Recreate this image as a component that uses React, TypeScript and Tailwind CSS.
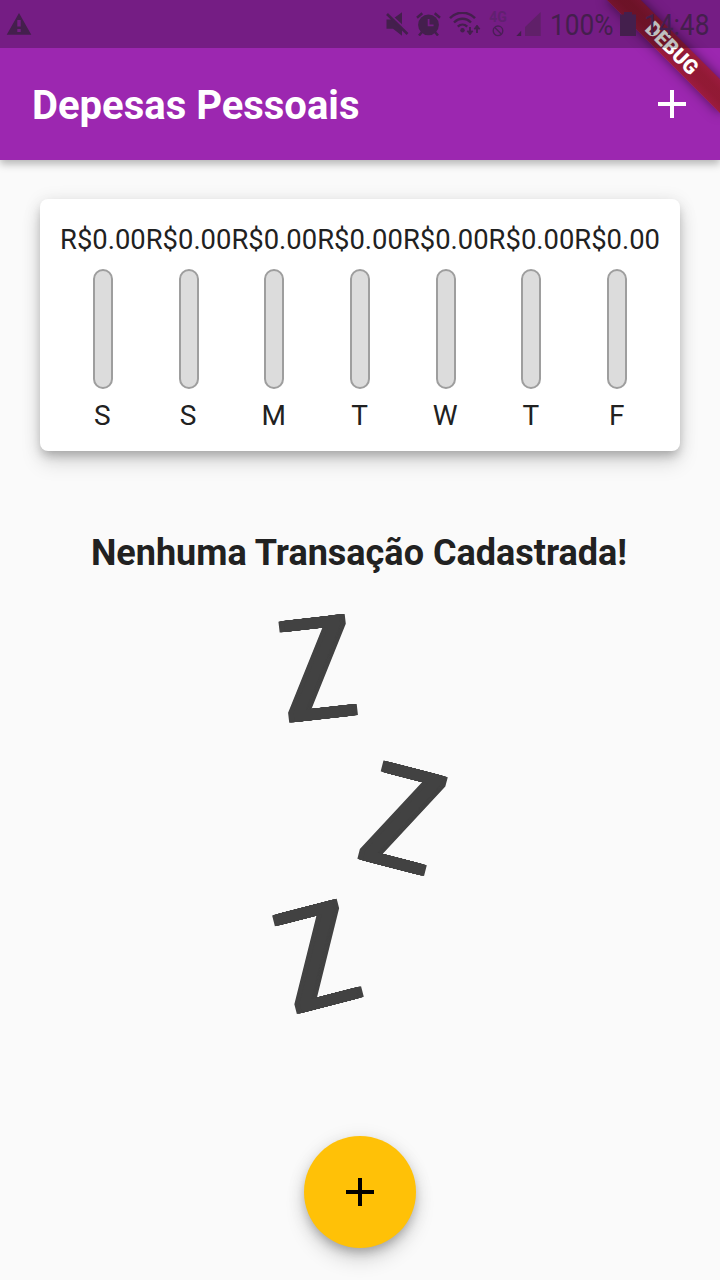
import React from "react";

const days = ["S", "S", "M", "T", "W", "T", "F"];

function StatusBar() {
  return (
    <div className="absolute inset-x-0 top-0 z-20 flex h-12 items-start bg-black/25 text-[#441f4d]">
      <svg className="ml-[6px] mt-3 h-6 w-[26px]" viewBox="0 0 26 24" fill="currentColor">
        <path fillRule="evenodd" d="M13 1 25.3 22.8H.7ZM11.3 8v6.5h3.4V8ZM11.3 17v3h3.4v-3Z" />
      </svg>
      <svg className="ml-[354px] mt-3 h-6 w-6" viewBox="0 0 24 24" fill="currentColor">
        <path d="M.5 7.5H6l10-7.3v23.5l-9-7H.5Z" />
        <path d="M1.8.8 23 20.5" stroke="#751d84" strokeWidth="2.4" />
        <path d="M1 2 21.5 22" stroke="currentColor" strokeWidth="2.6" />
      </svg>
      <svg className="ml-[5px] mt-3 h-6 w-[27px]" viewBox="0 0 27 24" fill="none" stroke="currentColor">
        <circle cx="13.5" cy="12.8" r="10.4" fill="currentColor" stroke="none" />
        <path d="M2 5.8 7.3 1.3M25 5.8 19.7 1.3" strokeWidth="2.5" />
        <path d="m7 20-3 3.5m16-3.5 3 3.5" strokeWidth="2.5" />
        <path d="M13.6 7v6.3h5" stroke="#751d84" strokeWidth="1.8" />
      </svg>
      <svg className="ml-[7px] mt-3 h-6 w-8" viewBox="0 0 32 24" fill="none" stroke="currentColor">
        <path d="M1 6.2C8-1.1 18.8-1.1 26 6.2" strokeWidth="2.5" />
        <path d="M5 10.5c5-5 12-5 17 0M8.8 14.7c2.8-2.8 6.6-2.8 9.4 0" strokeWidth="2.4" />
        <circle cx="13.5" cy="18.3" r="2.2" fill="currentColor" stroke="none" />
        <path d="M21 15v7M28 21v-7" strokeWidth="1.8" />
        <path d="m18 19 3 4 3-4ZM25 17l3-4 3 4Z" fill="currentColor" strokeWidth=".8" />
      </svg>
      <div className="ml-[7px] mt-[11px] flex w-5 flex-col items-center text-[#612070]">
        <span className="font-['Roboto'] text-[14px] font-bold leading-[13px]">4G</span>
        <svg className="mt-px h-3 w-3 text-[#4b1e57]" viewBox="0 0 12 12" fill="none" stroke="currentColor" strokeWidth="1.4">
          <circle cx="6" cy="5.8" r="4.8" />
          <path d="m2.8 2.6 6.4 6.4" />
        </svg>
      </div>
      <svg className="ml-[8px] mt-3 h-6 w-[25px]" viewBox="0 0 25 24">
        <path d="M.3 24 5.2 18.8V24Z" fill="#441f4d" />
        <path d="M9 24V15L24.7 0v24Z" fill="#602069" />
      </svg>
      <span className="ml-[9px] mt-[8px] w-[63px] origin-left scale-x-[0.89] whitespace-nowrap font-['Roboto'] text-[29.5px] leading-[35px]">100%</span>
      <svg className="ml-[7px] mt-3 h-6 w-4" viewBox="0 0 16 24" fill="currentColor">
        <path d="M4 0h8v2.5h4V24H0V2.5h4Z" />
      </svg>
      <span className="ml-[8px] mt-[8px] w-[66px] origin-left scale-x-[0.89] whitespace-nowrap font-['Roboto'] text-[29.5px] leading-[35px]">14:48</span>
    </div>
  );
}

function DebugBanner() {
  return (
    <div className="pointer-events-none absolute inset-0 z-10 overflow-hidden">
      <div className="absolute left-[640px] top-[56px] flex h-6 w-40 origin-[80px_-56px] rotate-45 items-center justify-center bg-[linear-gradient(to_bottom,rgba(155,23,23,0.74),rgba(143,22,22,0.8)_35%,rgba(143,22,22,0.8)_65%,rgba(155,23,23,0.74))] shadow-[0_0_12px_rgba(0,0,0,0.5)]">
        <span className="font-['Roboto'] text-[20.4px] font-black leading-6 text-white">DEBUG</span>
      </div>
    </div>
  );
}

function DayBar({ day }: { day: string }) {
  return (
    <div className="flex flex-1 flex-col items-center">
      <span className="text-[27.4px] leading-8">R$0.00</span>
      <div className="mt-[13px] h-[120px] w-5 rounded-[10px] border-2 border-[#9e9e9e] bg-[#dcdcdc]" />
      <span className="mt-[11px] -translate-x-[0.5px] text-[28px] leading-8">{day}</span>
    </div>
  );
}

function SleepLetter({ className }: { className: string }) {
  return (
    <div className={`absolute flex h-[102px] w-[68px] items-center justify-center ${className}`}>
      <span className="block scale-x-[0.785] font-['Roboto'] text-[143px] leading-[102px] [text-shadow:-7px_0_0_#424242,-6px_0_0_#424242,-5px_0_0_#424242,-4px_0_0_#424242,-3px_0_0_#424242,-2px_0_0_#424242,-1px_0_0_#424242,1px_0_0_#424242,2px_0_0_#424242,3px_0_0_#424242,4px_0_0_#424242,5px_0_0_#424242,6px_0_0_#424242,7px_0_0_#424242]">Z</span>
    </div>
  );
}

export default function App() {
  return (
    <div className="relative flex h-[1280px] w-[720px] flex-col overflow-hidden bg-[#fafafa] font-['Roboto',sans-serif] text-[#212121]">
      <StatusBar />
      <DebugBanner />
      <header className="flex h-40 shrink-0 items-center justify-between bg-[#9c27b0] pl-8 pr-[34px] pt-12 text-white shadow-[0_4px_8px_rgba(0,0,0,0.28)]">
        <h1 className="pt-[3px] text-[40px] font-bold leading-[48px]">Depesas Pessoais</h1>
        <svg className="h-7 w-7" viewBox="0 0 28 28" fill="currentColor">
          <path d="M12 0h4v12h12v4H16v12h-4V16H0v-4h12Z" />
        </svg>
      </header>
      <section className="mx-10 mt-[39px] flex h-[252px] shrink-0 rounded-lg bg-white px-5 pt-[25px] shadow-[0_6px_10px_-2px_rgba(0,0,0,0.2),0_12px_20px_rgba(0,0,0,0.13),0_2px_18px_rgba(0,0,0,0.1)]">
        {days.map((day, i) => (
          <DayBar key={i} day={day} />
        ))}
      </section>
      <h2 className="mt-[80px] pr-[2px] text-center text-[36px] font-bold leading-[44px]">Nenhuma Transação Cadastrada!</h2>
      <div className="relative h-[410px] w-full text-[#424242]">
        <SleepLetter className="left-[284px] top-[44px] rotate-[-6.5deg]" />
        <SleepLetter className="left-[369px] top-[194px] rotate-[14.5deg]" />
        <SleepLetter className="left-[284px] top-[332px] rotate-[-14.5deg]" />
      </div>
      <button className="absolute bottom-8 left-[304px] flex h-28 w-28 items-center justify-center rounded-full bg-[#ffc107] text-black shadow-[0_6px_10px_-2px_rgba(0,0,0,0.2),0_12px_20px_rgba(0,0,0,0.14),0_2px_18px_rgba(0,0,0,0.1)]">
        <svg className="h-7 w-7" viewBox="0 0 28 28" fill="currentColor">
          <path d="M12 0h4v12h12v4H16v12h-4V16H0v-4h12Z" />
        </svg>
      </button>
    </div>
  );
}
